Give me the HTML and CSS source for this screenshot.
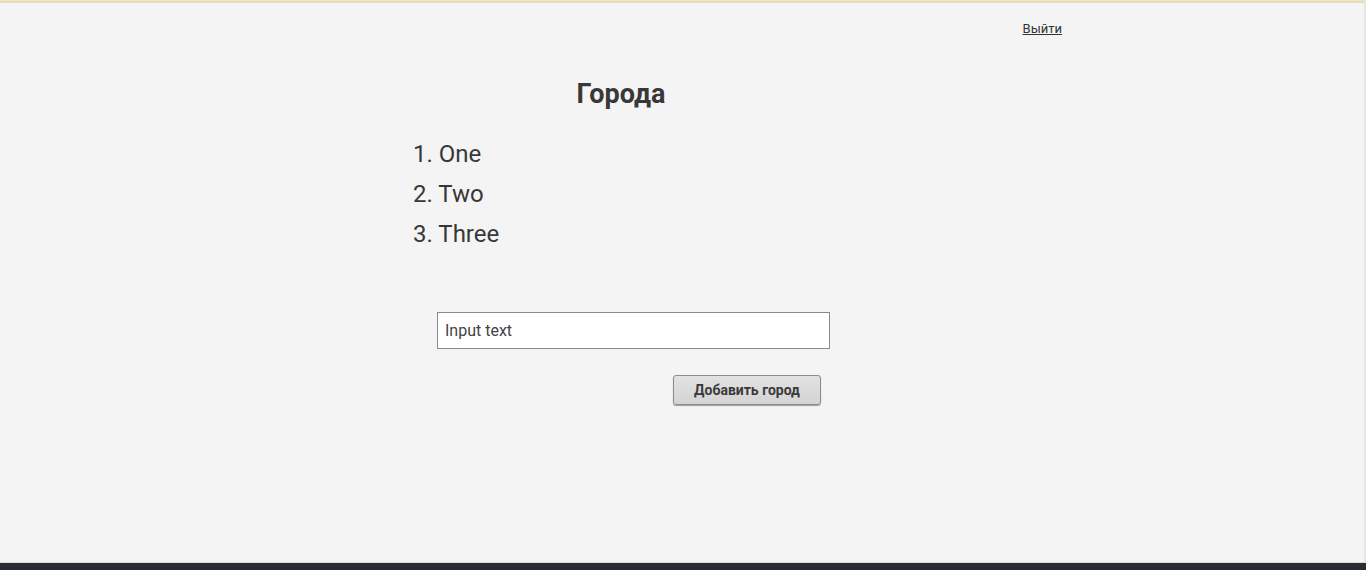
FILE: index.html
```html
<!DOCTYPE html>
<html lang="ru">
<head>
<meta charset="utf-8">
<title>Города</title>
<link rel="stylesheet" href="styles.css">
</head>
<body>
<div class="page">
  <div class="topline"></div>
  <header class="header">
    <a class="logout" href="#">Выйти</a>
  </header>
  <main class="main">
    <h1 class="title">Города</h1>
    <ol class="cities">
      <li>One</li>
      <li>Two</li>
      <li>Three</li>
    </ol>
    <form class="add-form">
      <input class="city-input" type="text" value="Input text">
      <div class="actions">
        <button class="add-btn" type="button">Добавить город</button>
      </div>
    </form>
  </main>
</div>
<footer class="footer"></footer>
</body>
</html>
```
FILE: styles.css
```css
html, body {
  margin: 0;
  padding: 0;
  height: 100%;
}
body {
  background: #f4f4f4;
  font-family: Roboto, "Noto Sans", sans-serif;
  color: #383838;
  display: flex;
  flex-direction: column;
  overflow: hidden;
}
.page {
  height: 563px;
  display: flex;
  flex-direction: column;
  border-bottom: 1px solid #dcdcdc;
  box-sizing: border-box;
  border-right: 2px solid #e6e6e6;
}
.topline {
  height: 3px;
  background: linear-gradient(#f3e6c6, #e3d5b5);
}
.header {
  display: flex;
  justify-content: flex-end;
  padding: 18px 302px 0 0;
  height: 20px;
}
.logout {
  font-size: 13px;
  color: #333;
  text-decoration: underline;
  line-height: 16px;
}
.main {
  width: 416px;
  margin-left: 413px;
  display: flex;
  flex-direction: column;
}
.title {
  margin: 37px 0 0 0;
  font-size: 27px;
  font-weight: 700;
  line-height: 32px;
  text-align: center;
  color: #383838;
}
.cities {
  margin: 24px 0 0 0;
  padding: 0;
  list-style: none;
  counter-reset: city;
}
.cities li {
  font-size: 24px;
  line-height: 40px;
  counter-increment: city;
}
.cities li::before {
  content: counter(city) ". ";
}
.add-form {
  margin-top: 58px;
  display: flex;
  flex-direction: column;
  padding-left: 24px;
}
.city-input {
  width: 393px;
  height: 37px;
  box-sizing: border-box;
  border: 1px solid #8a8a8a;
  background: #fff;
  padding: 0 7px;
  font-family: Roboto, "Noto Sans", sans-serif;
  font-size: 16px;
  color: #444;
  outline: none;
}
.actions {
  display: flex;
  justify-content: flex-end;
  padding-right: 8px;
  margin-top: 26px;
}
.add-btn {
  width: 148px;
  height: 30px;
  border: 1px solid #8c8c8c;
  border-radius: 3px;
  background: linear-gradient(#e2e2e2, #d4d4d4);
  box-shadow: 0 1px 1px rgba(0,0,0,0.35);
  font-family: Roboto, "Noto Sans", sans-serif;
  font-size: 14px;
  font-weight: 700;
  color: #3a3a3a;
  padding: 0;
}
.footer {
  height: 7px;
  background: #292d33;
}
```
